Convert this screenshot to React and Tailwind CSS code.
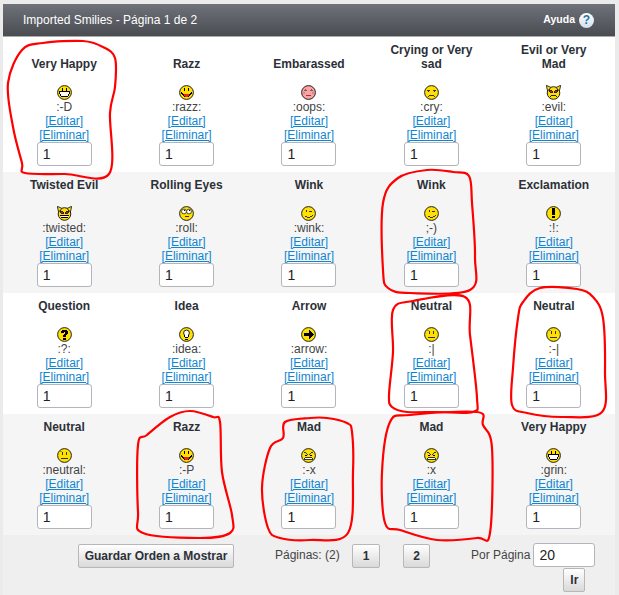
import React from 'react'

const ROWS = [
  [
    { title: 'Very Happy', code: ':-D', face: 'grin' },
    { title: 'Razz', code: ':razz:', face: 'razz' },
    { title: 'Embarassed', code: ':oops:', face: 'oops' },
    { title: 'Crying or Very sad', code: ':cry:', face: 'cry' },
    { title: 'Evil or Very Mad', code: ':evil:', face: 'evil' },
  ],
  [
    { title: 'Twisted Evil', code: ':twisted:', face: 'twisted' },
    { title: 'Rolling Eyes', code: ':roll:', face: 'roll' },
    { title: 'Wink', code: ':wink:', face: 'wink' },
    { title: 'Wink', code: ';-)', face: 'wink' },
    { title: 'Exclamation', code: ':!:', face: 'excl' },
  ],
  [
    { title: 'Question', code: ':?:', face: 'question' },
    { title: 'Idea', code: ':idea:', face: 'idea' },
    { title: 'Arrow', code: ':arrow:', face: 'arrow' },
    { title: 'Neutral', code: ':|', face: 'neutral' },
    { title: 'Neutral', code: ':-|', face: 'neutral' },
  ],
  [
    { title: 'Neutral', code: ':neutral:', face: 'neutral' },
    { title: 'Razz', code: ':-P', face: 'razz' },
    { title: 'Mad', code: ':-x', face: 'mad' },
    { title: 'Mad', code: ':x', face: 'mad' },
    { title: 'Very Happy', code: ':grin:', face: 'grin' },
  ],
]

// marcas a mano alzada sobre la captura
const SCRIBBLES = [
  [[22,50],[43,43],[83,41],[103,47],[115,58],[115,87],[110,113],[109,174],[65,174],[25,173],[22,163],[13,127],[8,83]],
  [[398,178],[427,170],[453,172],[469,176],[472,203],[475,257],[470,290],[410,293],[388,288],[383,270],[383,203]],
  [[393,310],[413,301],[465,297],[470,335],[477,398],[473,412],[437,412],[407,412],[392,407],[389,395],[393,352]],
  [[523,302],[540,288],[577,289],[593,297],[603,318],[605,372],[602,412],[563,417],[527,413],[512,405],[513,368],[518,318]],
  [[170,417],[190,411],[213,417],[220,422],[222,472],[232,515],[230,533],[200,538],[143,533],[138,512],[138,445],[147,435]],
  [[285,422],[310,418],[327,418],[347,423],[352,432],[353,472],[348,533],[310,540],[280,538],[268,528],[262,488],[270,448],[283,438]],
  [[390,422],[410,415],[477,412],[483,425],[492,448],[490,533],[477,538],[437,540],[400,530],[385,523],[382,472]],
]

// curva cerrada que pasa por todos los puntos
function scribblePath(pts) {
  const n = pts.length
  let d = `M${pts[0][0]} ${pts[0][1]}`
  for (let i = 0; i < n; i++) {
    const p0 = pts[(i - 1 + n) % n]
    const p1 = pts[i]
    const p2 = pts[(i + 1) % n]
    const p3 = pts[(i + 2) % n]
    const c1 = [p1[0] + (p2[0] - p0[0]) / 6, p1[1] + (p2[1] - p0[1]) / 6]
    const c2 = [p2[0] - (p3[0] - p1[0]) / 6, p2[1] - (p3[1] - p1[1]) / 6]
    d += `C${c1[0]} ${c1[1]} ${c2[0]} ${c2[1]} ${p2[0]} ${p2[1]}`
  }
  return d
}

function Px({ d, c = '#000' }) {
  return <path d={d} fill={c} shapeRendering="crispEdges" />
}

function FaceMarks({ face }) {
  switch (face) {
    case 'grin':
      return (
        <>
          <Px d="M5 3h1v3h-1zM9 3h1v3h-1z" />
          <Px d="M2 6h11v3h-1v2h-1v1h-7v-1h-1v-2h-1z" />
          <Px d="M3 7h9v2h-1v2h-7v-2h-1z" c="#fff" />
        </>
      )
    case 'razz':
      return (
        <>
          <Px d="M5 3h1v3h-1zM9 3h1v3h-1z" />
          <Px d="M2 7h1v1h1v1h7v-1h1v-1h1v2h-1v1h-1v1h-1v1h-5v-1h-1v-1h-1v-1h-1z" />
          <Px d="M5 9h5v2h-1v1h-3v-1h-1z" c="#f02020" />
        </>
      )
    case 'oops':
      return (
        <>
          <Px d="M3 5h3v1h-3zM9 5h3v1h-3z" c="#666" />
          <Px d="M4 4h1v1h-1zM10 4h1v1h-1z" c="#d33" />
          <Px d="M5 10h5v1h-5z" c="#a33" />
          <Px d="M2 7h2v2h-2zM11 7h2v2h-2z" c="#f07a7a" />
        </>
      )
    case 'cry':
      return (
        <>
          <Px d="M3 5h3v1h-3zM9 5h3v1h-3z" c="#333" />
          <Px d="M4 6h1v1h-1zM10 6h1v1h-1z" c="#333" />
          <Px d="M5 10h5v1h-5zM4 11h1v1h-1zM10 11h1v1h-1z" c="#333" />
        </>
      )
    case 'evil':
    case 'twisted':
      return (
        <>
          <path d="M0.3 0.3L5 2.5L1.6 6Z M14.7 0.3L10 2.5L13.4 6Z" fill="#ffe000" stroke="#222" strokeWidth="0.9" strokeLinejoin="round" />
          <Px d="M3 4h1v1h2v1h1v2h-3v-1h-1zM11 4h1v3h-1v1h-3v-2h1v-1h2z" c="#222" />
          <Px d="M4 6h2v1h-2zM9 6h2v1h-2z" c="#f01010" />
          {face === 'evil'
            ? <Px d="M5 10h5v1h-5zM4 11h1v1h-1zM10 11h1v1h-1z" c="#222" />
            : (
              <>
                <Px d="M3 9h9v1h-1v2h-7v-2h-1z" />
                <Px d="M4 10h7v1h-7z" c="#fff" />
              </>
            )}
        </>
      )
    case 'roll':
      return (
        <>
          <circle cx="5" cy="5.5" r="2.4" fill="#fff" stroke="#222" strokeWidth="0.8" />
          <circle cx="10" cy="5.5" r="2.4" fill="#fff" stroke="#222" strokeWidth="0.8" />
          <Px d="M5 4h1v1h-1zM10 4h1v1h-1z" />
          <Px d="M6 10h4v1h-4z" c="#333" />
        </>
      )
    case 'wink':
      return (
        <>
          <Px d="M5 4h1v2h-1z" c="#333" />
          <Px d="M8 5h3v1h-3z" c="#333" />
          <Px d="M11 9h1v1h-1zM9 10h2v1h-2zM6 11h3v1h-3zM4 10h2v1h-2z" c="#333" />
        </>
      )
    case 'excl':
      return <Px d="M6 2h3v7h-3zM6 10h3v2h-3z" />
    case 'question':
      return <Px d="M5 3h5v1h1v3h-1v1h-1v2h-3v-2h1v-1h1v-2h-1v1h-3v-2h1zM6 11h3v2h-3z" />
    case 'idea':
      return (
        <>
          <circle cx="7.5" cy="6" r="2.9" fill="#fff" stroke="#111" strokeWidth="0.9" />
          <Px d="M6 8h3v2h-3z" c="#fff" />
          <Px d="M6 10h3v1h-3zM6 12h3v1h-3z" />
          <Px d="M5 8h1v2h-1zM9 8h1v2h-1z" />
        </>
      )
    case 'arrow':
      return <Px d="M8 3h1v1h1v1h1v1h1v1h1v1h-1v1h-1v1h-1v1h-1v1h-1v-3h-5v-3h5z" />
    case 'neutral':
      return (
        <>
          <Px d="M5 4h1v3h-1zM9 4h1v3h-1z" c="#333" />
          <Px d="M3 3h2v1h-2z" c="#b89400" />
          <Px d="M4 10h7v1h-7z" c="#333" />
        </>
      )
    case 'mad':
      return (
        <>
          <Px d="M3 4h2v1h1v1h1v1h-1v-1h-1v-1h-2zM10 4h2v1h-2v1h-1v1h-1v-1h1v-1h1z" c="#333" />
          <Px d="M4 7h2v1h-2zM9 7h2v1h-2z" />
          <Px d="M4 9h7v1h1v2h-9v-2h1z" c="#333" />
          <Px d="M4 10h7v1h-7z" c="#fff" />
        </>
      )
    default:
      return null
  }
}

function Smiley({ face }) {
  const fill = face === 'oops' ? '#f8a5a5' : '#ffe000'
  const horned = face === 'evil' || face === 'twisted'
  return (
    <svg viewBox="0 0 15 15" className="w-[15px] h-[15px] block shrink-0">
      <circle cx="7.5" cy={horned ? 8 : 7.5} r={horned ? 6.3 : 6.9} fill={fill} stroke="#222" strokeWidth="1" />
      <FaceMarks face={face} />
    </svg>
  )
}

function Cell({ title, code, face }) {
  return (
    <div className="flex flex-col items-center justify-end pt-[6px] pb-[6px] text-center">
      <div className="w-[90px] font-bold text-[#2c3038] leading-[14px]">{title}</div>
      <div className="mt-[14px]"><Smiley face={face} /></div>
      <div className="leading-[14px] text-[#444]">{code}</div>
      <a href="#" className="leading-[14px] text-[#0f86d2] underline">[Editar]</a>
      <a href="#" className="leading-[14px] text-[#0f86d2] underline">[Eliminar]</a>
      <div className="w-[55px] h-[24px] bg-white border border-[#b4b4bc] rounded-[3px] text-left text-[14px] leading-[22px] pl-[5px] text-[#222]">1</div>
    </div>
  )
}

const btn = 'h-[24px] border border-[#b7b7b7] rounded-[2px] bg-gradient-to-b from-white to-[#d9d9d9] font-bold text-[#2c3038] text-center leading-[22px]'

export default function App() {
  return (
    <div className="relative h-[595px] overflow-hidden bg-[#ebebeb] pt-[4px] pl-[3px] pr-[4px] text-[12px]" style={{ fontFamily: '"Liberation Sans", Arial, sans-serif' }}>
      {/* Cabecera */}
      <div className="h-[33px] flex items-center justify-between pl-[20px] pr-[21px] bg-gradient-to-b from-[#6f7279] to-[#494c51] border-b border-[#a9abad]">
        <span className="text-white">Imported Smilies - Página 1 de 2</span>
        <span className="flex items-center gap-[4px] text-white font-bold text-[10.5px]">
          Ayuda
          <span className="w-[15px] h-[15px] rounded-full bg-gradient-to-b from-white to-[#cfe0ee] text-[#2a6fa8] text-[12px] leading-[15px] text-center font-bold">?</span>
        </span>
      </div>

      {/* Filas */}
      {ROWS.map((row, i) => (
        <div key={i} className={`grid grid-cols-5 ${i % 2 === 0 ? 'bg-white' : 'bg-[#f5f5f5]'}`}>
          {row.map((s, j) => <Cell key={j} {...s} />)}
        </div>
      ))}

      {/* Pie */}
      <div className="h-[60px] bg-[#efefef] flex items-start pt-[9px] pl-[75px] text-[#444]">
        <div className={`${btn} w-[156px]`}>Guardar Orden a Mostrar</div>
        <span className="ml-[41px] w-[62px] leading-[22px] whitespace-nowrap">Páginas: (2)</span>
        <div className={`${btn} ml-[15px] w-[28px]`}>1</div>
        <div className={`${btn} ml-[23px] w-[27px]`}>2</div>
        <div className="ml-[41px] -mt-px flex flex-col items-end">
          <div className="flex items-center gap-[3px]">
            <span className="leading-[24px] whitespace-nowrap">Por Página</span>
            <div className="w-[62px] h-[24px] bg-white border border-[#b4b4bc] rounded-[3px] text-[14px] leading-[22px] pl-[5px] text-[#222]">20</div>
          </div>
          <div className={`${btn} mt-px mr-[10px] w-[22px]`}>Ir</div>
        </div>
      </div>

      {/* Marcas en rojo */}
      <svg className="absolute inset-0 w-[619px] h-[595px] pointer-events-none" viewBox="0 0 619 595" fill="none">
        {SCRIBBLES.map((pts, i) => (
          <path key={i} d={scribblePath(pts)} stroke="#ff0000" strokeWidth="2.2" strokeLinejoin="round" strokeLinecap="round" />
        ))}
      </svg>
    </div>
  )
}
